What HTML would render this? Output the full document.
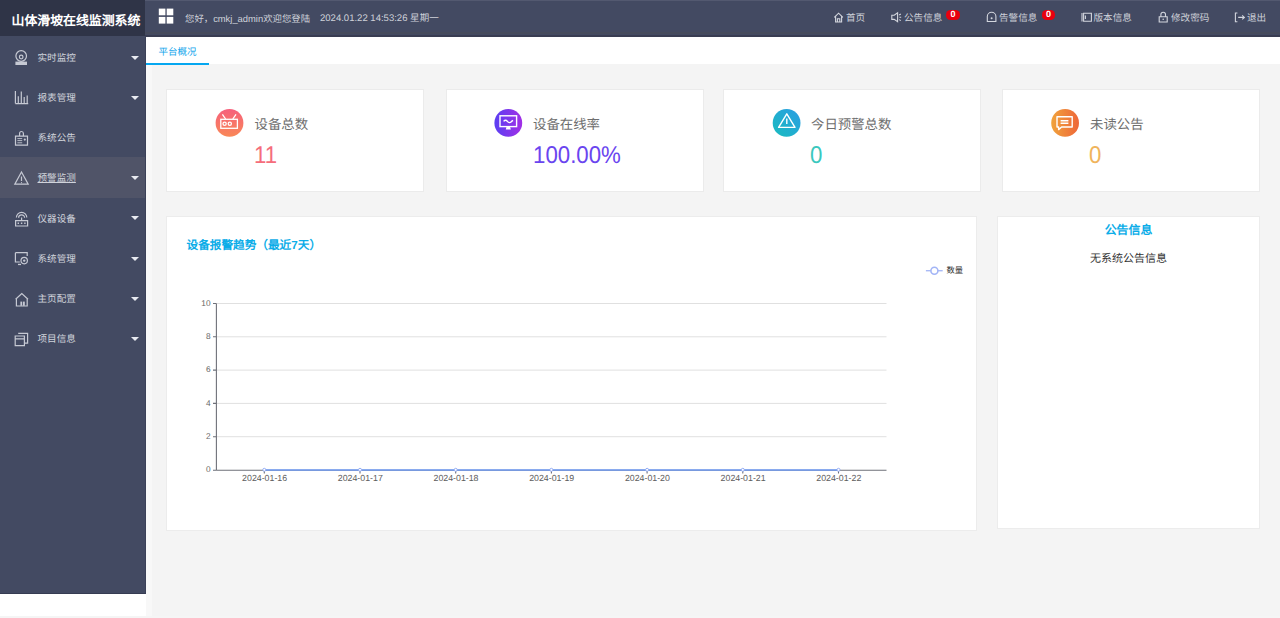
<!DOCTYPE html>
<html lang="zh-CN"><head><meta charset="utf-8">
<style>
*{box-sizing:border-box;margin:0;padding:0}
html,body{width:1280px;height:618px;overflow:hidden;background:#fff;font-family:"Liberation Sans",sans-serif;text-rendering:geometricPrecision}
.a{position:absolute;white-space:nowrap}
#logo{left:0;top:0;width:145px;height:36px;background:#2f3447}
#hdr{left:145px;top:0;width:1135px;height:37px;background:#434a62}
#side{left:0;top:36px;width:146px;height:558px;background:#434a62;border-right:1px solid #3b4158;border-bottom:1px solid #363c52}
#hl{left:0;top:156.5px;width:145px;height:41px;background:#505468}
.mt{color:#d0d3db;font-size:9.6px;line-height:12px;left:37.5px;margin-top:1.8px}
.ar{width:0;height:0;border-left:4.5px solid transparent;border-right:4.5px solid transparent;border-top:4.5px solid #e8eaf0;left:130.5px}
#tabbar{left:146px;top:37px;width:1134px;height:27px;background:#fff}
#main{left:146px;top:64px;width:1134px;height:552px;background:#f4f4f4}
.card{position:absolute;top:88.5px;height:103px;width:258px;background:#fff;border:1px solid #ebebeb}
.tt{font-size:13.4px;color:#6e6e6e;line-height:16px;margin-top:2.3px}
.num{font-size:24.2px;line-height:26px;transform:scaleX(0.92);transform-origin:0 0}
.nv{color:#cdd0d8;font-size:9.6px;line-height:12px;top:12.8px}
.bd{top:10.4px;height:9.2px;width:13.4px;border-radius:4.6px;background:#e8000e;color:#fff;font-size:9px;font-weight:bold;line-height:9.2px;text-align:center}
.pn{background:#fff;border:1px solid #ececec}
.yl{font-size:8.3px;color:#666;line-height:10px;text-align:right;width:20px}
.xl{font-size:8.8px;color:#5c5c5c;line-height:10px;text-align:center;width:60px;margin-left:0.6px}
</style></head>
<body>
<div id="logo" class="a"></div>
<div class="a" style="left:11.5px;top:13px;color:#fff;font-weight:bold;font-size:12.9px;line-height:16px">山体滑坡在线监测系统</div>
<div id="hdr" class="a"></div>
<div class="a" style="left:145px;top:32px;width:1135px;height:2px;background:#464b5c"></div>
<div class="a" style="left:145px;top:35px;width:1135px;height:2px;background:#393d52"></div>

<!-- greeting -->
<div class="a nv" style="left:185px;color:#cfd2da;font-size:9.4px">您好，cmkj_admin欢迎您登陆</div>
<div class="a nv" style="left:320px;color:#cfd2da;font-size:9.54px">2024.01.22 14:53:26 星期一</div>

<!-- nav -->
<div class="a nv" style="left:846px">首页</div>
<div class="a nv" style="left:904px">公告信息</div>
<div class="a bd" style="left:946.4px">0</div>
<div class="a nv" style="left:999px">告警信息</div>
<div class="a bd" style="left:1041.9px">0</div>
<div class="a nv" style="left:1093.5px">版本信息</div>
<div class="a nv" style="left:1171px">修改密码</div>
<div class="a nv" style="left:1247px">退出</div>

<div id="side" class="a"></div>
<div id="hl" class="a"></div>
<div class="a mt" style="top:51px">实时监控</div>
<div class="a mt" style="top:91.2px">报表管理</div>
<div class="a mt" style="top:131.4px">系统公告</div>
<div class="a mt" style="top:171.6px;text-decoration:underline">预警监测</div>
<div class="a mt" style="top:211.8px">仪器设备</div>
<div class="a mt" style="top:252px">系统管理</div>
<div class="a mt" style="top:292.2px">主页配置</div>
<div class="a mt" style="top:332.4px">项目信息</div>
<div class="a ar" style="top:55.5px"></div>
<div class="a ar" style="top:95.7px"></div>
<div class="a ar" style="top:176px"></div>
<div class="a ar" style="top:216.3px"></div>
<div class="a ar" style="top:256.5px"></div>
<div class="a ar" style="top:296.7px"></div>
<div class="a ar" style="top:336.9px"></div>

<div id="tabbar" class="a"></div>
<div id="main" class="a"></div>
<div class="a" style="left:158.5px;top:46.5px;line-height:12px;font-size:9.5px;color:#14a6ec">平台概况</div>
<div class="a" style="left:146px;top:63px;width:63px;height:2px;background:#05a7f0"></div>
<div class="a" style="left:146px;top:65px;width:6px;height:551px;background:#f8f8f8"></div>
<div class="a" style="left:145px;top:0;width:1135px;height:1px;background:#535970"></div>
<div class="a" style="left:0;top:616px;width:1280px;height:2px;background:#f5f5f5"></div>

<div class="card" style="left:166px"></div>
<div class="card" style="left:445.5px"></div>
<div class="card" style="left:723px"></div>
<div class="card" style="left:1001.5px;width:258.5px"></div>

<div class="a tt" style="left:254.5px;top:115px">设备总数</div>
<div class="a num" style="left:254px;top:142.6px;color:#f56d7b">11</div>
<div class="a tt" style="left:533px;top:115px">设备在线率</div>
<div class="a num" style="left:532.5px;top:142.6px;color:#6a45ef">100.00%</div>
<div class="a tt" style="left:811px;top:115px">今日预警总数</div>
<div class="a num" style="left:809.5px;top:142.6px;color:#3ac8be">0</div>
<div class="a tt" style="left:1090px;top:115px">未读公告</div>
<div class="a num" style="left:1088.5px;top:142.6px;color:#f0b45c">0</div>

<div class="a pn" style="left:166px;top:215.5px;width:810.5px;height:315px"></div>
<div class="a" style="left:186.5px;top:238.5px;font-size:11.65px;line-height:14px;font-weight:bold;color:#0cade8">设备报警趋势（最近7天）</div>
<div class="a pn" style="left:997px;top:215.5px;width:263px;height:313px"></div>
<div class="a" style="left:997px;width:263px;top:223px;text-align:center;font-size:11.9px;line-height:14px;font-weight:bold;color:#0cade8">公告信息</div>
<div class="a" style="left:997px;width:263px;top:252px;text-align:center;font-size:11px;line-height:14px;color:#333">无系统公告信息</div>

<div class="a" style="left:946.5px;top:264.8px;font-size:8.3px;line-height:10px;color:#333">数量</div>

<div class="a yl" style="left:190.5px;top:297.6px">10</div>
<div class="a yl" style="left:190.5px;top:330.9px">8</div>
<div class="a yl" style="left:190.5px;top:364.2px">6</div>
<div class="a yl" style="left:190.5px;top:397.5px">4</div>
<div class="a yl" style="left:190.5px;top:430.8px">2</div>
<div class="a yl" style="left:190.5px;top:464.1px">0</div>

<div class="a xl" style="left:234px;top:473px">2024-01-16</div>
<div class="a xl" style="left:329.7px;top:473px">2024-01-17</div>
<div class="a xl" style="left:425.4px;top:473px">2024-01-18</div>
<div class="a xl" style="left:521.1px;top:473px">2024-01-19</div>
<div class="a xl" style="left:616.8px;top:473px">2024-01-20</div>
<div class="a xl" style="left:712.5px;top:473px">2024-01-21</div>
<div class="a xl" style="left:808.2px;top:473px">2024-01-22</div>

<svg class="a" style="left:0;top:0" width="1280" height="618" viewBox="0 0 1280 618">
<defs>
<linearGradient id="g1" x1="0" y1="0" x2="0" y2="1"><stop offset="0" stop-color="#f6607c"/><stop offset="1" stop-color="#f98857"/></linearGradient>
<linearGradient id="g2" x1="0" y1="0" x2="1" y2="0"><stop offset="0" stop-color="#5a3ff2"/><stop offset="1" stop-color="#a22fe6"/></linearGradient>
<linearGradient id="g3" x1="0" y1="1" x2="1" y2="0"><stop offset="0" stop-color="#19bcbe"/><stop offset="1" stop-color="#2b9de4"/></linearGradient>
<linearGradient id="g4" x1="0" y1="0" x2="1" y2="0"><stop offset="0" stop-color="#f0a33c"/><stop offset="1" stop-color="#ee6638"/></linearGradient>
</defs>
<!-- grid icon -->
<g fill="#fff">
<rect x="158.8" y="8.6" width="6.6" height="6.7"/><rect x="166.7" y="8.6" width="6.6" height="6.7"/>
<rect x="158.8" y="16.9" width="6.6" height="6.7"/><rect x="166.7" y="16.9" width="6.6" height="6.7"/>
</g>
<!-- nav icons -->
<g fill="none" stroke="#d3d6de" stroke-width="1.1">
<path d="M834.3 17.3 L838.6 13.2 L842.9 17.3 M835.6 16.2 V22 H841.6 V16.2 M837.4 22 V18.8 H839.8 V22"/>
<path d="M891.8 15.2 H894.2 L897.6 12.8 V21.8 L894.2 19.4 H891.8 Z M899.2 15 L900.8 14 M899.4 17.3 H901.2 M899.2 19.6 L900.8 20.6"/>
<path d="M987.3 21.5 V16.6 A4.3 4.3 0 0 1 995.9 16.6 V21.5 Z"/>
<path d="M1082 13 V21.5 M1083.6 13.2 H1091.4 V21.3 H1083.6 Z M1085.4 15.5 V19"/>
<path d="M1159.2 16.8 H1167.2 V22 H1159.2 Z M1160.9 16.8 V14.6 A2.3 2.3 0 0 1 1165.5 14.6 V16.8"/>
<path d="M1237.4 13 H1235.4 V21.8 H1237.4 M1238.2 17.4 H1244.4 M1242.2 15.4 L1244.4 17.4 L1242.2 19.4"/>
</g>
<circle cx="991.6" cy="18.3" r="1" fill="#d3d6de"/>
<circle cx="1163.2" cy="19.3" r="0.8" fill="#d3d6de"/>
<!-- sidebar icons -->
<g fill="none" stroke="#c6c9d3" stroke-width="1.2">
<circle cx="21.2" cy="56" r="5.3"/><circle cx="21.2" cy="57" r="1.8"/>
<path d="M15.4 103.6 H28.2 M15.4 91 V103.6 M18.3 96.2 V103 M21.3 91.6 V103 M24.2 97 V103 M27.2 95.6 V103"/>
<path d="M15.5 136.2 H27.5 V145.2 H15.5 Z M19.6 136.2 V133.4 A1.9 1.9 0 0 1 23.4 133.4 V136.2"/>
<path d="M17.4 138.6 H22.2 M17.4 140.6 H22.2 M17.4 142.8 H22.2" stroke-width="0.9"/>
<path d="M21.5 172 L28.2 184.2 H14.8 Z M21.5 176.5 V181"/>
<path d="M15.6 220.6 H27.6 V226 H15.6 Z M21.6 220.6 V217.4 M16.4 217.6 A5.2 5.2 0 0 1 26.8 217.6 M18.6 217.8 A3 3 0 0 1 24.6 217.8"/>
<path d="M17.6 223.3 H19 M20.9 223.3 H22.3 M24.2 223.3 H25.6" stroke-width="1.4"/>
<path d="M15.4 252.7 H27.2 V256 M15.4 252.7 V262 H19.8"/>
<circle cx="24.2" cy="260.6" r="3.2"/>
<path d="M15.6 299.3 L21.8 293.6 L28 299.3 M16.4 298.6 V306 H27.2 V298.6"/>
<path d="M15.2 336 H24.4 V345.6 H15.2 Z M15.2 338.8 H24.4 M18.2 333.4 H27.6 V343.2 H24.4"/>
</g>
<g fill="#c6c9d3">
<rect x="15.4" y="61.6" width="11.6" height="3.4"/>
<rect x="20.4" y="301.6" width="1.8" height="4.2"/><rect x="23" y="301.6" width="1.8" height="4.2"/>
<circle cx="21.3" cy="283.6" r="0"/>
<rect x="21" y="182.2" width="1" height="1"/>
<circle cx="24.8" cy="139.6" r="1.1"/>
<circle cx="24.2" cy="260.6" r="1.2"/>
<rect x="18" y="263.8" width="3" height="1.3"/>
</g>
<!-- card icons -->
<circle cx="229.5" cy="122.9" r="13.9" fill="url(#g1)"/>
<g fill="none" stroke="#fff" stroke-width="1.3">
<rect x="220.8" y="119.3" width="16.6" height="9"/>
<path d="M222.4 114.4 L225.6 119 M236 114.4 L232.8 119"/>
<circle cx="224.6" cy="123.8" r="1.6"/><circle cx="229.8" cy="123.8" r="1.6"/>
</g>
<circle cx="508.3" cy="122.9" r="13.9" fill="url(#g2)"/>
<g fill="none" stroke="#fff" stroke-width="1.4">
<rect x="500" y="115.8" width="16.6" height="10.8"/>
<path d="M503.6 121.4 Q505.6 119 507.4 121.4 T511.6 121.4 L513 120.4"/>
</g>
<path d="M506.6 126.6 H510 L510.8 129.4 H505.8 Z" fill="#fff"/>
<circle cx="786.6" cy="122.9" r="13.9" fill="url(#g3)"/>
<g fill="none" stroke="#fff" stroke-width="1.4" stroke-linejoin="round">
<path d="M786.8 113.8 L795 127.4 H778.6 Z M786.8 118.6 V124"/>
</g>
<circle cx="1065.1" cy="122.9" r="13.9" fill="url(#g4)"/>
<g fill="none" stroke="#fff" stroke-width="1.4" stroke-linejoin="round">
<path d="M1057 116.8 H1072.2 V127 H1061.6 L1058.6 129.6 V127 H1057 Z M1060.6 120.8 H1068.4 M1060.6 123.2 H1068.4"/>
</g>
<!-- chart grid -->
<g stroke="#e0e0e0" stroke-width="1">
<line x1="216.5" y1="303.5" x2="886.5" y2="303.5"/>
<line x1="216.5" y1="336.8" x2="886.5" y2="336.8"/>
<line x1="216.5" y1="370.1" x2="886.5" y2="370.1"/>
<line x1="216.5" y1="403.4" x2="886.5" y2="403.4"/>
<line x1="216.5" y1="436.7" x2="886.5" y2="436.7"/>
</g>
<g stroke="#6e7079" stroke-width="1.1">
<line x1="216.4" y1="303.5" x2="216.4" y2="470.3"/>
<line x1="216.4" y1="470.3" x2="886.5" y2="470.3"/>
<path d="M213 303.5 H216.4 M213 336.8 H216.4 M213 370.1 H216.4 M213 403.4 H216.4 M213 436.7 H216.4 M213 470.3 H216.4"/>
<path d="M264.3 470.3 V473.5 M360 470.3 V473.5 M455.7 470.3 V473.5 M551.4 470.3 V473.5 M647.1 470.3 V473.5 M742.8 470.3 V473.5 M838.5 470.3 V473.5"/>
</g>
<line x1="264.3" y1="469.9" x2="838.5" y2="469.9" stroke="#6f9bf4" stroke-width="1.5"/>
<g fill="#fff" stroke="#8aa5f3" stroke-width="0.9">
<circle cx="264.3" cy="469.8" r="1.5"/><circle cx="360" cy="469.8" r="1.5"/><circle cx="455.7" cy="469.8" r="1.5"/><circle cx="551.4" cy="469.8" r="1.5"/><circle cx="647.1" cy="469.8" r="1.5"/><circle cx="742.8" cy="469.8" r="1.5"/><circle cx="838.5" cy="469.8" r="1.5"/>
</g>
<!-- legend -->
<line x1="925.9" y1="270.7" x2="942.7" y2="270.7" stroke="#a9baf6" stroke-width="1.4"/>
<circle cx="934.4" cy="270.7" r="3.5" fill="#fff" stroke="#a3b5f6" stroke-width="1.6"/>
</svg>
</body></html>
